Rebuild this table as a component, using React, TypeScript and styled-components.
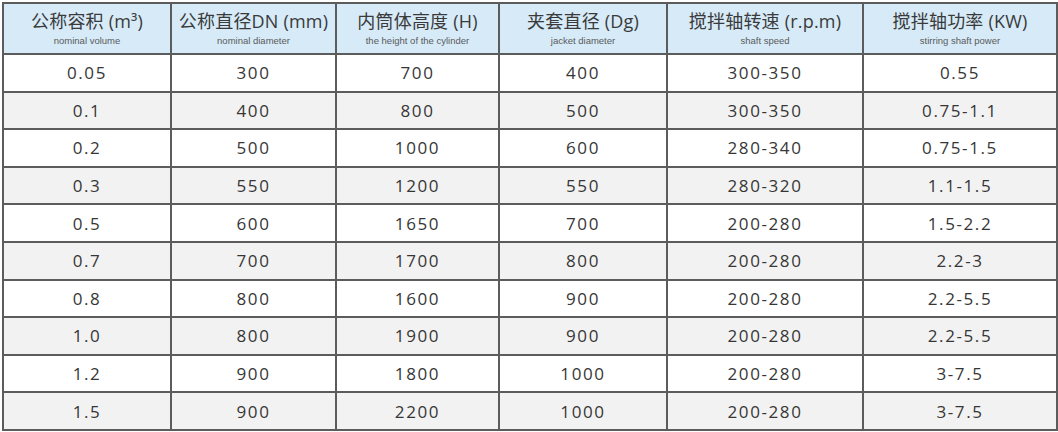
import React from "react";
import styled, { createGlobalStyle } from "styled-components";

const GlobalStyle = createGlobalStyle`
  html, body {
    margin: 0;
    padding: 0;
    background: #ffffff;
  }
  body {
    font-family: "Open Sans", "Noto Sans CJK SC", sans-serif;
  }
`;

const Page = styled.div`
  padding: 2px 0 0 2px;
`;

const Table = styled.table`
  border-collapse: collapse;
  table-layout: fixed;
  width: 1054px;
  border: 2px solid #5c5c5c;
  color: #333333;
`;

const HeadRow = styled.tr`
  height: 51px;
  background: #d6eaf8;
`;

const HeadCell = styled.th`
  border: 2px solid #5c5c5c;
  padding: 0;
  text-align: center;
  vertical-align: middle;
  font-weight: normal;
`;

const Title = styled.div`
  font-family: "Open Sans", "Noto Sans CJK SC", sans-serif;
  font-size: 18px;
  line-height: 22px;
  color: #3a3a3a;
  letter-spacing: 0.2px;
`;

const Sub = styled.div`
  font-family: "Liberation Sans", Arial, sans-serif;
  font-size: 9.5px;
  line-height: 12px;
  color: #5a5a5a;
  margin-top: 3px;
`;

const Row = styled.tr<{ $shade: boolean }>`
  height: 37.6px;
  background: ${p => (p.$shade ? "#f2f2f2" : "#ffffff")};
`;

const Cell = styled.td`
  border: 2px solid #5c5c5c;
  padding: 0;
  text-align: center;
  vertical-align: middle;
  font-family: "Open Sans", sans-serif;
  font-size: 17px;
  letter-spacing: 1.6px;
  color: #363636;
`;

const columns = [
  { title: "公称容积 (m³)", sub: "nominal volume", width: 168 },
  { title: "公称直径DN (mm)", sub: "nominal diameter", width: 165 },
  { title: "内筒体高度 (H)", sub: "the height of the cylinder", width: 163 },
  { title: "夹套直径 (Dg)", sub: "jacket diameter", width: 168 },
  { title: "搅拌轴转速 (r.p.m)", sub: "shaft speed", width: 196 },
  { title: "搅拌轴功率 (KW)", sub: "stirring shaft power", width: 194 },
];

const rows = [
  ["0.05", "300", "700", "400", "300-350", "0.55"],
  ["0.1", "400", "800", "500", "300-350", "0.75-1.1"],
  ["0.2", "500", "1000", "600", "280-340", "0.75-1.5"],
  ["0.3", "550", "1200", "550", "280-320", "1.1-1.5"],
  ["0.5", "600", "1650", "700", "200-280", "1.5-2.2"],
  ["0.7", "700", "1700", "800", "200-280", "2.2-3"],
  ["0.8", "800", "1600", "900", "200-280", "2.2-5.5"],
  ["1.0", "800", "1900", "900", "200-280", "2.2-5.5"],
  ["1.2", "900", "1800", "1000", "200-280", "3-7.5"],
  ["1.5", "900", "2200", "1000", "200-280", "3-7.5"],
];

const App: React.FunctionComponent = () => {
  return (
    <Page>
      <GlobalStyle />
      <Table>
        <colgroup>
          {columns.map(c => (
            <col key={c.sub} style={{ width: c.width }} />
          ))}
        </colgroup>
        <thead>
          <HeadRow>
            {columns.map(c => (
              <HeadCell key={c.sub}>
                <Title>{c.title}</Title>
                <Sub>{c.sub}</Sub>
              </HeadCell>
            ))}
          </HeadRow>
        </thead>
        <tbody>
          {rows.map((r, i) => (
            <Row key={i} $shade={i % 2 === 1}>
              {r.map((v, j) => (
                <Cell key={j}>{v}</Cell>
              ))}
            </Row>
          ))}
        </tbody>
      </Table>
    </Page>
  );
};

export default App;
